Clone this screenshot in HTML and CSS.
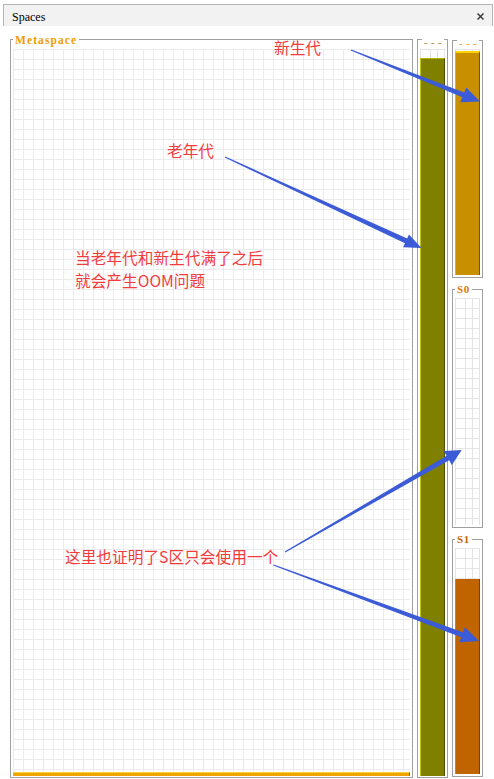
FILE: index.html
```html
<!DOCTYPE html>
<html lang="zh">
<head>
<meta charset="utf-8">
<title>Spaces</title>
<link rel="stylesheet" href="styles.css">
</head>
<body>
<div class="page">
  <div class="tab">
    <span class="tab-title">Spaces</span>
    <svg class="close" width="7" height="7" viewBox="0 0 7 7"><path d="M0.5 0.5L6.5 6.5M6.5 0.5L0.5 6.5" stroke="#3c3c3c" stroke-width="1.5" fill="none"/></svg>
  </div>
  <div class="spaces">
    <div class="box meta">
      <span class="lbl lbl-meta">Metaspace</span>
      <div class="plot grid"><div class="fill fill-meta" style="height:4px"></div></div>
    </div>
    <div class="box col old">
      <span class="lbl lbl-dash lbl-dash-old">- - -</span>
      <div class="plot cgrid"><div class="fill fill-old" style="height:98.8%"></div></div>
    </div>
    <div class="stack">
      <div class="box col young">
        <span class="lbl lbl-dash lbl-dash-eden">- - -</span>
        <div class="plot cgrid"><div class="fill fill-eden" style="height:99.2%"></div></div>
      </div>
      <div class="box col young">
        <span class="lbl lbl-s0">S0</span>
        <div class="plot cgrid"></div>
      </div>
      <div class="box col young">
        <span class="lbl lbl-s1">S1</span>
        <div class="plot cgrid"><div class="fill fill-s1" style="height:86%"></div></div>
      </div>
    </div>
  </div>

  <svg class="arrows" width="494" height="779" viewBox="0 0 494 779">
    <polygon points="350.78,50.56 462.35,97.15 460.31,102.26 480,101.5 466.25,87.40 464.21,92.51 351.22,49.44"/>
    <polygon points="224.75,157.54 404.98,243.22 403.13,247.21 421.5,248 409.01,234.51 407.16,238.50 225.25,156.46"/>
    <polygon points="285.3,552.52 449.14,460.25 451.84,464.93 461.7,450 443.84,451.07 446.54,455.75 284.7,551.48"/>
    <polygon points="273.29,565.56 461.22,637.20 459.34,642.26 479,641 464.90,627.26 463.02,632.32 273.71,564.44"/>
  </svg>

  <div class="note note-young">新生代</div>
  <div class="note note-old">老年代</div>
  <div class="note note-full">
    <span class="note-line">当老年代和新生代满了之后</span>
    <span class="note-line">就会产生OOM问题</span>
  </div>
  <div class="note note-s">这里也证明了S区只会使用一个</div>
</div>
</body>
</html>
```

FILE: styles.css
```css
html, body {
  margin: 0;
  padding: 0;
  background: #ffffff;
}

.page {
  position: relative;
  width: 494px;
  height: 779px;
  overflow: hidden;
  background: #ffffff;
}

.tab {
  box-sizing: border-box;
  height: 22px;
  margin: 4px 1px 0 3px;
  padding: 2px 8px 0 8px;
  border: 1px solid #b4b4b4;
  border-bottom: none;
  background: #f2f2f2;
  display: flex;
  align-items: center;
  justify-content: space-between;
}

.tab-title {
  font-family: "Liberation Serif", serif;
  font-size: 12px;
  line-height: 14px;
  color: #000000;
}

.close {
  display: block;
}

.spaces {
  box-sizing: border-box;
  height: 753px;
  padding: 13px 0 1px 10px;
  display: flex;
  gap: 4px;
}

.box {
  position: relative;
  box-sizing: border-box;
  border: 1px solid #a0a0a0;
  display: flex;
  flex-direction: column;
}

.meta {
  width: 403px;
  padding: 9px 2px 1px 2px;
}

.col {
  width: 31px;
}

.old {
  padding: 9px 2px 1px 2px;
}

.stack {
  box-sizing: border-box;
  width: 31px;
  padding: 1px 0 1px 0;
  display: flex;
  flex-direction: column;
  gap: 11px;
}

.young {
  flex: 1;
  padding: 8px 2px 2px 2px;
}

.plot {
  flex: 1;
  display: flex;
  flex-direction: column;
  justify-content: flex-end;
}

.grid {
  background-image:
    linear-gradient(to bottom, #ebebeb 1px, transparent 1px),
    linear-gradient(to right, #ebebeb 1px, transparent 1px);
  background-size: 10px 10px;
}

.cgrid {
  background-image:
    linear-gradient(to bottom, #e4e4e4 1px, transparent 1px),
    linear-gradient(to right, #e4e4e4 0 1px, transparent 1px 10px, #e4e4e4 10px 11px, transparent 11px 17px, #e4e4e4 17px 18px, transparent 18px 24px, #e4e4e4 24px 25px);
  background-size: 10px 10px, 100% 100%;
  background-repeat: repeat, no-repeat;
}

.fill {
  box-sizing: border-box;
  flex: none;
}

.fill-meta {
  background: #f0a400;
  border-top: 1px solid #ffd23c;
  border-right: 1px solid #a06800;
}

.fill-old {
  background: #808000;
  border-top: 1px solid #b4b400;
  border-left: 1px solid #c4c400;
  border-right: 1px solid #505000;
}

.fill-eden {
  background: #c89000;
  border-top: 2px solid #ffd400;
  border-left: 1px solid #e8b000;
  border-right: 1px solid #785400;
}

.fill-s1 {
  background: #c06400;
  border-left: 1px solid #e08000;
  border-right: 1px solid #7c4000;
}

.lbl {
  position: absolute;
  top: -6px;
  left: 2px;
  padding: 0 2px;
  background: #ffffff;
  font-family: "Liberation Serif", serif;
  font-weight: bold;
  font-size: 11px;
  line-height: 11px;
  white-space: nowrap;
}

.lbl-meta {
  top: -5px;
  color: #f39c00;
  font-size: 11.5px;
  letter-spacing: 1.1px;
}

.lbl-dash {
  top: -3px;
  left: 4px;
  font-weight: normal;
  letter-spacing: 0.3px;
}

.lbl-dash-old {
  color: #b08030;
}

.lbl-dash-eden {
  color: #f0a000;
}

.lbl-s0 {
  color: #e07800;
  letter-spacing: 0.6px;
}

.lbl-s1 {
  color: #c86400;
  letter-spacing: 0.6px;
}

.arrows {
  position: absolute;
  left: 0;
  top: 0;
  pointer-events: none;
  fill: #3c5bd6;
}

.note {
  position: absolute;
  font-family: "Noto Sans CJK SC", "Noto Sans", sans-serif;
  font-size: 15.7px;
  line-height: 1;
  color: #f23c3c;
  white-space: nowrap;
}

.note-young {
  left: 274px;
  top: 40px;
}

.note-old {
  left: 167px;
  top: 143px;
}

.note-full {
  left: 75px;
  top: 250px;
  display: flex;
  flex-direction: column;
  gap: 7.3px;
}

.note-line {
  display: block;
  line-height: 1;
}

.note-s {
  left: 65px;
  top: 549px;
}
```
